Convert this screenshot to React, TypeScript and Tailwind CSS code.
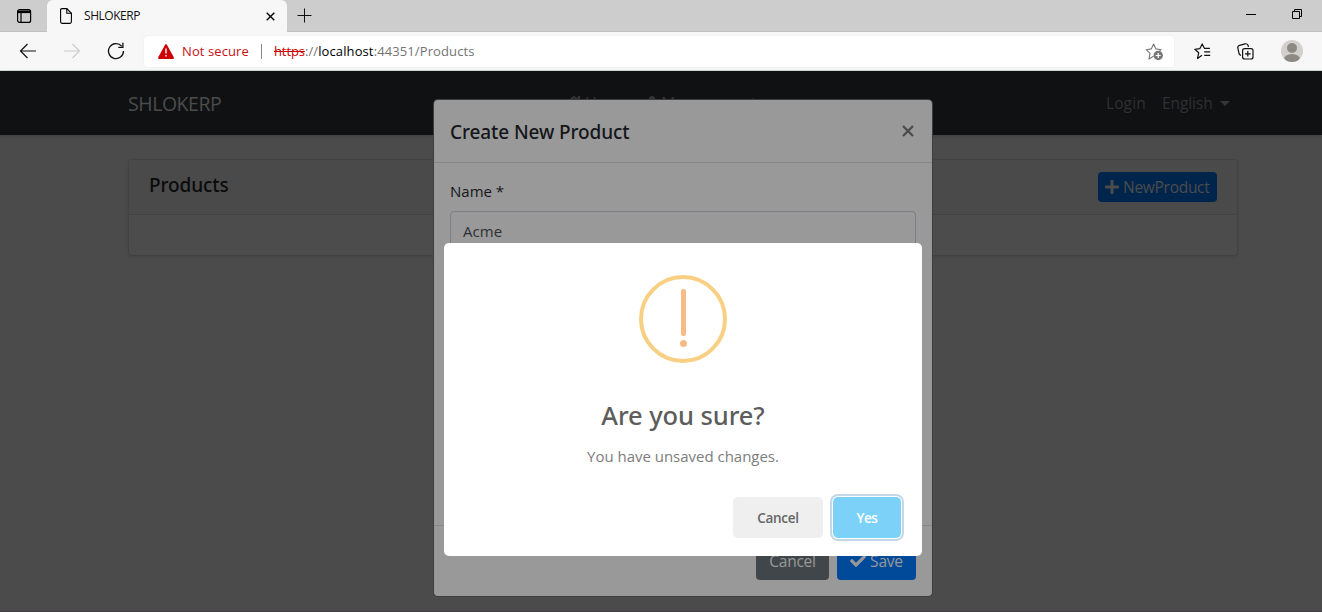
import type { ReactNode } from "react";
import { FaCheck, FaHome, FaPlus, FaUser } from "react-icons/fa";

function TabStrip() {
  return (
    <div className="flex h-8 border-b border-[#c0c0c0] bg-[#cdcdcd]">
      <div className="flex w-[47px] items-center pl-[17px]">
        <svg width="15" height="14" viewBox="0 0 15 14" fill="none" stroke="#000" strokeWidth="1.2">
          <rect x="0.6" y="0.6" width="13" height="12.8" rx="2" />
          <path d="M1 1.5h12.5v2.6H1z" fill="#000" stroke="none" />
          <path d="M4 4v9" />
        </svg>
      </div>
      <div className="flex h-8 w-60 items-center rounded-t-md bg-[#f7f7f7] pl-[13px]">
        <svg width="12" height="16" viewBox="0 0 12 16" fill="none" stroke="#000" strokeWidth="1.1">
          <path d="M2 .6h4.8l4.6 4.7v8.3q0 1.8-1.6 1.8H2.1Q.6 15.4.6 13.6V2Q.6.6 2 .6z" />
          <path d="M6.8.6v4.7h4.6" />
        </svg>
        <span className="ml-[12px] w-[182px] text-[12px] leading-4 tracking-[-0.45px] text-[#111]">SHLOKERP</span>
        <svg className="mt-px" width="9" height="9" viewBox="0 0 9 9" stroke="#000" strokeWidth="1.4">
          <path d="M.7.7l7.6 7.6M8.3.7L.7 8.3" />
        </svg>
      </div>
      <svg className="mt-2 ml-[10px]" width="15" height="15" viewBox="0 0 15 15" stroke="#111" strokeWidth="1">
        <path d="M.5 7.5h14M7.5.5v14" />
      </svg>
      <div className="flex-1" />
      <svg className="mt-[9px] mr-[19px]" width="57" height="11" viewBox="0 0 57 11" fill="none" stroke="#000">
        <path d="M0 5.500h10" />
        <path d="M46.500 2.500h7v7h-7zM48.500 2.500v-2h7v7h-2" />
      </svg>
    </div>
  );
}

function Toolbar() {
  return (
    <div className="flex h-[39px] items-center border-b border-[#d3dcdb] bg-[#f7f7f7]">
      <svg className="ml-[19px]" width="18" height="16" viewBox="0 0 18 16" fill="none" stroke="#111" strokeWidth="1.2">
        <path d="M17 8H1.500M8.500 1L1.500 8l7 7" />
      </svg>
      <svg className="ml-[27px]" width="17" height="16" viewBox="0 0 17 16" fill="none" stroke="#ccc" strokeWidth="1.2">
        <path d="M0 8h15.500M8.500 1l7 7-7 7" />
      </svg>
      <svg className="ml-[26px]" width="18" height="18" viewBox="0 0 18 18" fill="none" stroke="#111" strokeWidth="1.3">
        <path d="M16.500 9A7.500 7.500 0 1 1 14.700 4.200M15.900.8v4.600h-4.600" />
      </svg>
      <div className="ml-[19px] flex h-[31px] w-[1030px] items-center rounded bg-white pl-[14px] text-[13px] shadow-[0_0_3px_rgba(0,0,0,0.05)]">
        <svg width="16" height="15" viewBox="0 0 16 15">
          <path d="M7.100.7Q8 -.6 8.900.7l6.900 12.600q.5 1.700-1 1.700H1.200q-1.500 0-1-1.700z" fill="#c00" />
          <path d="M7.300 4.500h1.400v5H7.300zM7.300 11h1.400v1.500H7.300z" fill="#fff" />
        </svg>
        <span className="mt-px ml-[8px] w-[79px] tracking-[0.1px] text-[#c80f12]">Not secure</span>
        <div className="h-[15px] w-px bg-[#888]" />
        <span className="mt-px ml-[12px] tracking-[0.11px] whitespace-nowrap text-[#757575]">
          <span className="tracking-[-0.1px] text-[#c00] line-through">https</span>://<span className="text-black">localhost</span>:44351/Products
        </span>
        <svg className="mr-[10px] ml-auto mt-px" width="19" height="18" viewBox="0 0 19 18" fill="none" stroke="#767676" strokeWidth="1.1" strokeLinejoin="round">
          <path d="M8.500 13.200L4 16l1-5.700L1.200 6.700l5.100-.8L8.600 1l2.300 4.900 5.200.8-1.900 1.900" />
          <circle cx="13.200" cy="12.500" r="4.700" fill="#767676" stroke="none" />
          <path d="M13.200 10v5M10.700 12.500h5" stroke="#fff" strokeWidth="1.2" />
        </svg>
      </div>
      <svg className="ml-[20px]" width="17" height="17" viewBox="0 0 17 17" fill="none" stroke="#111" strokeWidth="1.2" strokeLinejoin="round">
        <path d="M8 12.200L3.500 15.500l1.200-5.700L.8 6.300l5-.6L8.200.9l2.200 4.400h5.500M10.200 8.800h6M10.200 12.300h6" />
      </svg>
      <svg className="ml-[26px]" width="17" height="17" viewBox="0 0 17 17" fill="none" stroke="#111" strokeWidth="1.2">
        <path d="M4 12.300q-1.500-.3-1.900-1.500L.8 5Q.4 3 2.500 2.400l5.600-1.600Q10.200.5 10.900 2l.6 2" />
        <rect x="5.600" y="5.600" width="10.400" height="10.400" rx="2" />
        <path d="M10.800 8v5.600M8 10.800h5.600" />
      </svg>
      <svg className="ml-[26px]" width="24" height="24" viewBox="0 0 24 24">
        <clipPath id="avatar"><circle cx="12" cy="12" r="11" /></clipPath>
        <circle cx="12" cy="12" r="11" fill="#d2d0cd" />
        <g clipPath="url(#avatar)" fill="#8c8884">
          <circle cx="12" cy="9" r="5" />
          <ellipse cx="12" cy="20.500" rx="8" ry="5.500" />
        </g>
      </svg>
    </div>
  );
}

function Navbar() {
  return (
    <nav className="relative flex h-16 items-center bg-[#101113] pr-[84px] pl-32 shadow-[0_1px_3px_rgba(0,0,0,0.15)]">
      <span className="pt-px text-[19.500px] tracking-[-0.45px] text-[#4c4c4c]">SHLOKERP</span>
      <div className="absolute top-5 left-[565px] flex text-[16px] text-[#333435]">
        <span className="flex w-20 items-center gap-0.5"><FaHome size={18} />Home</span>
        <span className="flex items-center gap-0.5 tracking-[-0.4px]"><FaUser size={14} />Management</span>
      </div>
      <div className="ml-auto flex items-center pt-px text-[15.500px] text-[#2f3031]">
        <span className="w-[56px] tracking-[0.1px]">Login</span>
        <span className="w-[58px] tracking-[-0.1px]">English</span>
        <span className="mr-2 border-x-[5px] border-t-[5px] border-x-transparent border-t-[#353637]" />
      </div>
    </nav>
  );
}

function ProductsCard() {
  return (
    <section className="mt-6 ml-32 h-[97px] w-[1110px] rounded border border-[#424242] bg-[#4c4c4c] shadow-[0_1px_3px_rgba(0,0,0,0.1)]">
      <header className="flex h-[55px] items-start justify-between border-b border-[#424242] bg-[#4a4a4a] px-5">
        <h1 className="mt-[11px] font-['Noto_Sans','Open_Sans',sans-serif] text-[19px] leading-7 font-medium tracking-[-0.1px] text-[#0a0b0c]">Products</h1>
        <button className="mt-3 flex h-[30px] w-[119px] items-center gap-[3px] rounded bg-[#00254d] text-[15.500px] text-[#4c4c4c]">
          <FaPlus size={16} className="ml-1.5 shrink-0" />
          <span className="pt-0.5 tracking-[-0.28px]">NewProduct</span>
        </button>
      </header>
    </section>
  );
}

function ProductModal({ children }: { children: ReactNode }) {
  return (
    <div className="absolute top-[100px] left-[434px] flex h-[496px] w-[498px] flex-col rounded bg-[#999] shadow-[0_0_0_1px_#3d3d3d]">
      <header className="flex h-[63px] items-center justify-between border-b border-[#85888a] px-4">
        <h2 className="pt-0.5 font-['Noto_Sans','Open_Sans',sans-serif] text-[19px] font-medium tracking-[-0.1px] text-[#141619]">Create New Product</h2>
        <svg className="mr-0.5" width="12" height="12" viewBox="0 0 12 12" stroke="#4c4c4c" strokeWidth="2.3">
          <path d="M1 1l10 10M11 1L1 11" />
        </svg>
      </header>
      <div className="flex-1 px-4 pt-4 text-[15px]">
        <label className="block h-8 leading-6 text-[#141619]">Name *</label>
        <div className="flex h-[38px] items-center rounded border border-[#7c7f83] px-3 pt-0.5 tracking-[0.1px] text-[#2c3034]">Acme</div>
      </div>
      <footer className="flex h-[71px] justify-end gap-2 border-t border-[#85888a] px-4 pt-4 text-[15.500px] text-[#999]">
        <button className="h-[38px] w-[73px] rounded bg-[#41464b] pt-0.5 tracking-[-0.25px]">Cancel</button>
        <button className="flex h-[38px] w-[79px] items-center justify-center gap-1 rounded bg-[#004a99]">
          <FaCheck size={16} />
          <span className="pt-0.5 tracking-[-0.2px]">Save</span>
        </button>
      </footer>
      {children}
    </div>
  );
}

function ConfirmDialog() {
  return (
    <div className="absolute top-[143px] left-[10px] flex h-[313px] w-[478px] flex-col items-center rounded-[5px] bg-white">
      <svg className="mt-8" width="88" height="88" viewBox="0 0 88 88">
        <circle cx="44" cy="44" r="42" fill="none" stroke="#f9d083" strokeWidth="4" />
        <rect x="42" y="14" width="5" height="47" rx="2" fill="#f8bb86" />
        <circle cx="44.500" cy="68.500" r="3.500" fill="#f8bb86" />
      </svg>
      <h3 className="mt-[34px] font-['Noto_Sans','Open_Sans',sans-serif] text-[25.500px] leading-9 font-medium tracking-[-0.1px] text-[#5d5d5d]">Are you sure?</h3>
      <p className="mt-[11px] text-[15px] leading-6 tracking-[-0.02px] text-[#7d7d7d]">You have unsaved changes.</p>
      <div className="mt-[29px] flex gap-[10px] self-end pr-[21px] text-[13.500px] font-semibold">
        <button className="h-[41px] w-[90px] rounded-[5px] bg-[#efefef] pt-0.5 tracking-[-0.3px] text-[#666]">Cancel</button>
        <button className="h-[41px] w-[68px] rounded-[5px] bg-[#7cd1f9] pt-0.5 tracking-[-0.5px] text-white shadow-[0_0_0_1px_#fff,0_0_0_3px_#c5d7e5]">Yes</button>
      </div>
    </div>
  );
}

export default function App() {
  return (
    <div className="relative flex h-[612px] w-[1322px] flex-col overflow-hidden border-b border-[#403e40] bg-[#4b4b4b] font-['Open_Sans','Noto_Sans',sans-serif]">
      <TabStrip />
      <Toolbar />
      <Navbar />
      <ProductsCard />
      <ProductModal>
        <ConfirmDialog />
      </ProductModal>
    </div>
  );
}
